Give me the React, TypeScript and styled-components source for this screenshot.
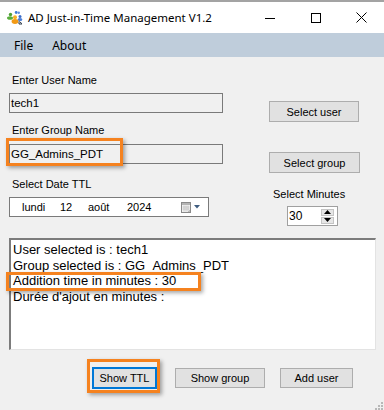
import React from "react";
import styled, { createGlobalStyle } from "styled-components";

const GlobalStyle = createGlobalStyle`
  html, body {
    margin: 0;
    padding: 0;
    background: #f0f0f0;
  }
  body {
    width: 384px;
    height: 410px;
    overflow: hidden;
  }
`;

const Window = styled.div`
  position: relative;
  width: 384px;
  height: 410px;
  display: flex;
  flex-direction: column;
  background: #f0f0f0;
  color: #000;
  font-family: "Liberation Sans", Arial, sans-serif;
  overflow: hidden;
`;

const TitleBar = styled.div`
  height: 31px;
  border-top: 2px solid #a3a3a3;
  background: #fff;
  display: flex;
  align-items: center;
  padding-left: 7px;
`;

const TitleText = styled.span`
  margin-left: 5px;
  font-family: "Noto Sans", "Open Sans", sans-serif;
  font-size: 11.5px;
  color: #000;
  white-space: nowrap;
`;

const Controls = styled.div`
  margin-left: auto;
  display: flex;
  height: 100%;
`;

const ControlButton = styled.div`
  width: ${(p: { $w: number }) => p.$w}px;
  height: 100%;
  display: flex;
  align-items: center;
  justify-content: center;
`;

const MenuBar = styled.div`
  height: 24px;
  background: #bfcddb;
  display: flex;
  align-items: center;
  padding-left: 7px;
  gap: 5px;
`;

const MenuItem = styled.span`
  padding: 0 7px;
  font-family: "Noto Sans", "Open Sans", sans-serif;
  font-size: 12px;
`;

const Body = styled.div`
  flex: 1;
  display: flex;
  flex-direction: column;
  padding: 0 8px 0 9px;
`;

const TopArea = styled.div`
  height: 169px;
  display: grid;
  grid-template-columns: 214px 91px;
  column-gap: 46px;
  align-items: start;
`;

const Column = styled.div`
  display: flex;
  flex-direction: column;
  align-items: flex-start;
`;

const Label = styled.div<{ $top: number; $left?: number }>`
  margin-top: ${(p) => p.$top}px;
  margin-left: ${(p) => p.$left ?? 3}px;
  font-size: 11px;
  line-height: 14px;
  height: 14px;
  white-space: nowrap;
`;

const Anchor = styled.div<{ $top?: number; $left?: number }>`
  position: relative;
  margin-top: ${(p) => p.$top ?? 0}px;
  margin-left: ${(p) => p.$left ?? 0}px;
`;

const TextField = styled.div`
  box-sizing: border-box;
  width: 214px;
  height: 20px;
  border: 1px solid #7a7a7a;
  background: #f0f0f0;
  padding-left: 1px;
  font-size: 11.5px;
  line-height: 18px;
  white-space: nowrap;
`;

const DatePicker = styled.div`
  box-sizing: border-box;
  width: 200px;
  height: 20px;
  border: 1px solid #7a7a7a;
  background: #fff;
  display: flex;
  align-items: center;
  padding: 0 7px 0 12px;
  font-size: 11px;
  line-height: 18px;
`;

const DateParts = styled.div`
  display: grid;
  grid-template-columns: 38px 28px 39px auto;
`;

const CalendarButton = styled.div`
  margin-left: auto;
  display: flex;
  align-items: center;
`;

const Button = styled.div<{ $w: number; $h?: number; $focused?: boolean }>`
  box-sizing: border-box;
  width: ${(p) => p.$w}px;
  height: ${(p) => p.$h ?? 21}px;
  background: #e1e1e1;
  border: ${(p) => (p.$focused ? "2px solid #0078d7" : "1px solid #adadad")};
  display: flex;
  align-items: center;
  justify-content: center;
  font-size: 11px;
  white-space: nowrap;
`;

const Spinner = styled.div`
  box-sizing: border-box;
  width: 51px;
  height: 20px;
  border: 1px solid #a0a0a0;
  background: #fff;
  display: flex;
  align-items: center;
  padding: 0 3px 0 1px;
  font-size: 12px;
`;

const SpinButtons = styled.div`
  margin-left: auto;
  display: flex;
  flex-direction: column;
  gap: 1px;
`;

const SpinButton = styled.div`
  box-sizing: border-box;
  width: 13px;
  height: 7px;
  background: #e6e6e6;
  border: 1px solid #c4c4c4;
  display: flex;
  align-items: center;
  justify-content: center;
`;

const OutputBox = styled.div`
  position: relative;
  margin-top: 12px;
  box-sizing: border-box;
  height: 112px;
  background: #fff;
  border-top: 2px solid #7c7c7c;
  border-left: 2px solid #7c7c7c;
  border-right: 1px solid #e3e3e3;
  border-bottom: 1px solid #e3e3e3;
  padding: 2px 2px;
  font-size: 13px;
  line-height: 15.6px;
`;

const OutputLine = styled.div`
  white-space: nowrap;
`;

const ButtonRow = styled.div`
  margin-top: 17px;
  height: 22px;
  display: flex;
  align-items: center;
  padding-left: 83px;
`;

const Callout = styled.div<{ $left: number; $top: number; $w: number; $h: number }>`
  position: absolute;
  left: ${(p) => p.$left}px;
  top: ${(p) => p.$top}px;
  width: ${(p) => p.$w}px;
  height: ${(p) => p.$h}px;
  box-sizing: border-box;
  border: 3px solid #f5821f;
  box-shadow: 2px 2px 4px rgba(0, 0, 0, 0.35);
  pointer-events: none;
`;

const SizeGrip = styled.svg`
  position: absolute;
  right: 1px;
  bottom: 0;
`;

const AppIcon = () => (
  <svg width="16" height="14" viewBox="0 0 16 14">
    <circle cx="3.5" cy="3.5" r="1.7" fill="#4e9f35" />
    <ellipse cx="3" cy="7" rx="3" ry="1.8" fill="#5aae3c" />
    <circle cx="9.2" cy="1.5" r="1.4" fill="#3d7ad6" />
    <circle cx="11.8" cy="1.8" r="1.2" fill="#5b8fe0" />
    <circle cx="13" cy="5.5" r="1.5" fill="#3a6cc9" />
    <ellipse cx="13" cy="8.5" rx="2.4" ry="1.6" fill="#4b7fd8" />
    <circle cx="8" cy="6.2" r="2" fill="#f6b026" />
    <ellipse cx="8" cy="10.5" rx="3.4" ry="2.4" fill="#f29a16" />
    <path d="M12 10.5 L12 13 L15 13" stroke="#2d3a4a" strokeWidth="1" fill="none" />
    <path d="M12.5 10.5 L15 12.8" stroke="#2d3a4a" strokeWidth="1" />
  </svg>
);

const CalendarIcon = () => (
  <svg width="20" height="11" viewBox="0 0 20 11">
    <rect x="0.5" y="0.5" width="9" height="10" fill="#f2f2f2" stroke="#8a8a8a" />
    <rect x="1" y="1" width="8" height="2" fill="#b4b4b4" />
    <path d="M3 3.5 V9.5 M5 3.5 V9.5 M7 3.5 V9.5 M1.5 5 H8.5 M1.5 7 H8.5" stroke="#c2c2c2" strokeWidth="0.8" />
    <path d="M7 10.5 L9.5 8" stroke="#8a8a8a" />
    <path d="M13 3 L19 3 L16 6.5 Z" fill="#3f5d80" />
  </svg>
);

export default function App() {
  return (
    <>
      <GlobalStyle />
      <Window>
        <TitleBar>
          <AppIcon />
          <TitleText>AD Just-in-Time Management V1.2</TitleText>
          <Controls>
            <ControlButton $w={46}>
              <svg width="10" height="10" viewBox="0 0 10 10">
                <path d="M0 5.5 H10" stroke="#000" strokeWidth="1" />
              </svg>
            </ControlButton>
            <ControlButton $w={46}>
              <svg width="10" height="10" viewBox="0 0 10 10">
                <rect x="0.5" y="0.5" width="9" height="9" fill="none" stroke="#000" strokeWidth="1" />
              </svg>
            </ControlButton>
            <ControlButton $w={45}>
              <svg width="11" height="11" viewBox="0 0 11 11">
                <path d="M0.5 0.5 L10.5 10.5 M10.5 0.5 L0.5 10.5" stroke="#000" strokeWidth="1" />
              </svg>
            </ControlButton>
          </Controls>
        </TitleBar>

        <MenuBar>
          <MenuItem>File</MenuItem>
          <MenuItem>About</MenuItem>
        </MenuBar>

        <Body>
          <TopArea>
            <Column>
              <Label $top={16}>Enter User Name</Label>
              <Anchor $top={6}>
                <TextField>tech1</TextField>
              </Anchor>
              <Label $top={10}>Enter Group Name</Label>
              <Anchor $top={7}>
                <TextField>GG_Admins_PDT</TextField>
                <Callout $left={-3} $top={-6} $w={117} $h={28} />
              </Anchor>
              <Label $top={13}>Select Date TTL</Label>
              <Anchor $top={6}>
                <DatePicker>
                  <DateParts>
                    <span>lundi</span>
                    <span>12</span>
                    <span>août</span>
                    <span>2024</span>
                  </DateParts>
                  <CalendarButton>
                    <CalendarIcon />
                  </CalendarButton>
                </DatePicker>
              </Anchor>
            </Column>

            <Column>
              <Anchor $top={44}>
                <Button $w={90}>Select user</Button>
              </Anchor>
              <Anchor $top={30}>
                <Button $w={91}>Select group</Button>
              </Anchor>
              <Label $top={14} $left={4}>Select Minutes</Label>
              <Anchor $top={5} $left={18}>
                <Spinner>
                  <span>30</span>
                  <SpinButtons>
                    <SpinButton>
                      <svg width="7" height="4" viewBox="0 0 7 4">
                        <path d="M0 4 L7 4 L3.5 0 Z" fill="#000" />
                      </svg>
                    </SpinButton>
                    <SpinButton>
                      <svg width="7" height="4" viewBox="0 0 7 4">
                        <path d="M0 0 L7 0 L3.5 4 Z" fill="#000" />
                      </svg>
                    </SpinButton>
                  </SpinButtons>
                </Spinner>
              </Anchor>
            </Column>
          </TopArea>

          <OutputBox>
            <OutputLine>User selected is : tech1</OutputLine>
            <OutputLine>Group selected is : GG_Admins_PDT</OutputLine>
            <OutputLine>Addition time in minutes : 30</OutputLine>
            <OutputLine>Durée d'ajout en minutes :</OutputLine>
            <Callout $left={-5} $top={32} $w={195} $h={19} />
          </OutputBox>

          <ButtonRow>
            <Anchor>
              <Button $w={65} $h={22} $focused>
                Show TTL
              </Button>
              <Callout $left={-5} $top={-8} $w={73} $h={34} />
            </Anchor>
            <Anchor $left={18}>
              <Button $w={90} $h={20}>Show group</Button>
            </Anchor>
            <Anchor $left={15}>
              <Button $w={73} $h={20}>Add user</Button>
            </Anchor>
          </ButtonRow>
        </Body>

        <SizeGrip width="8" height="8" viewBox="0 0 8 8">
          <rect x="6" y="0" width="2" height="2" fill="#b8b8b8" />
          <rect x="3" y="3" width="2" height="2" fill="#b8b8b8" />
          <rect x="6" y="3" width="2" height="2" fill="#b8b8b8" />
          <rect x="0" y="6" width="2" height="2" fill="#b8b8b8" />
          <rect x="3" y="6" width="2" height="2" fill="#b8b8b8" />
          <rect x="6" y="6" width="2" height="2" fill="#b8b8b8" />
        </SizeGrip>
      </Window>
    </>
  );
}
